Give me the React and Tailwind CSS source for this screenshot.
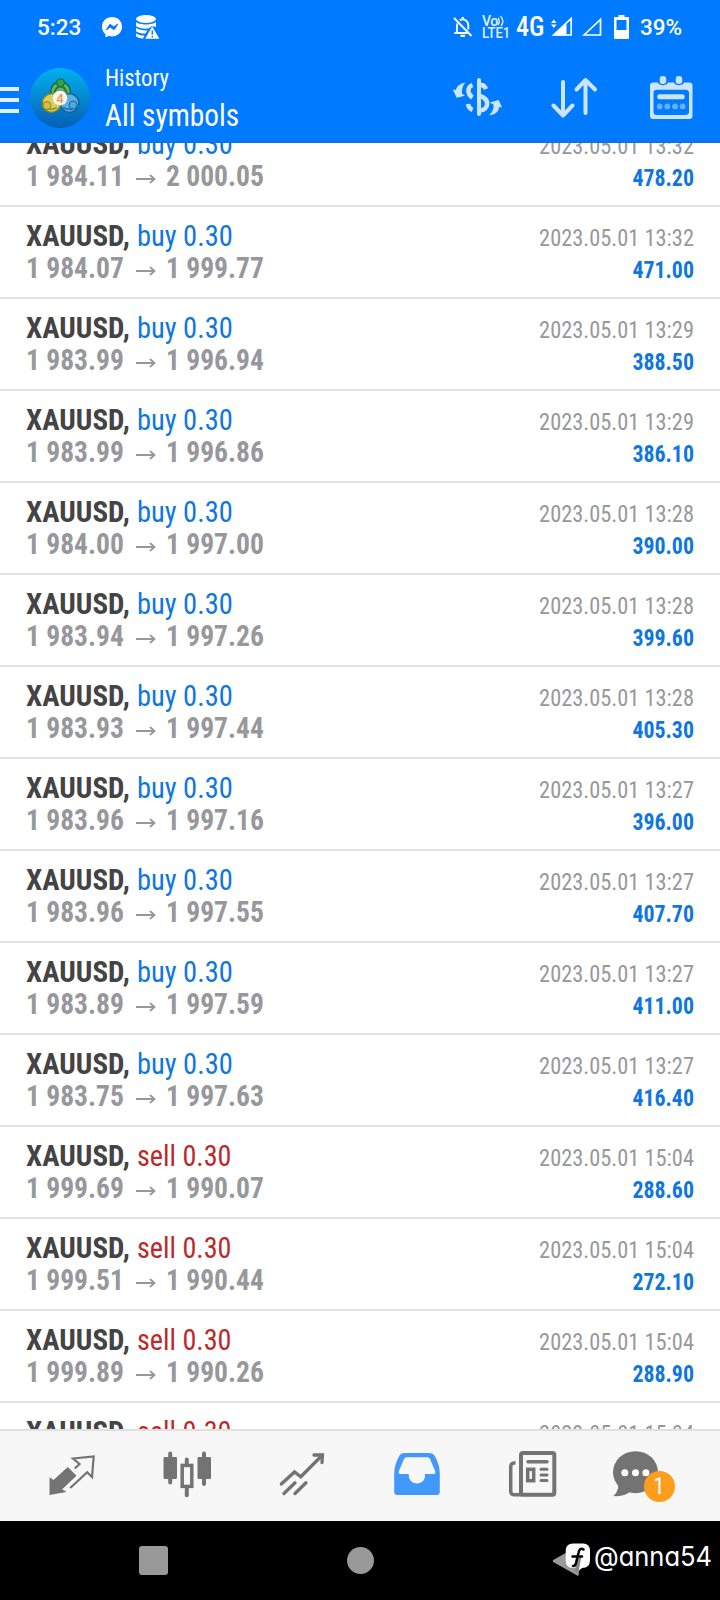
import React from 'react';
import { BsMessenger } from 'react-icons/bs';

const deals = [
  { side: 'buy', open: '1 984.11', close: '2 000.05', time: '2023.05.01 13:32', profit: '478.20' },
  { side: 'buy', open: '1 984.07', close: '1 999.77', time: '2023.05.01 13:32', profit: '471.00' },
  { side: 'buy', open: '1 983.99', close: '1 996.94', time: '2023.05.01 13:29', profit: '388.50' },
  { side: 'buy', open: '1 983.99', close: '1 996.86', time: '2023.05.01 13:29', profit: '386.10' },
  { side: 'buy', open: '1 984.00', close: '1 997.00', time: '2023.05.01 13:28', profit: '390.00' },
  { side: 'buy', open: '1 983.94', close: '1 997.26', time: '2023.05.01 13:28', profit: '399.60' },
  { side: 'buy', open: '1 983.93', close: '1 997.44', time: '2023.05.01 13:28', profit: '405.30' },
  { side: 'buy', open: '1 983.96', close: '1 997.16', time: '2023.05.01 13:27', profit: '396.00' },
  { side: 'buy', open: '1 983.96', close: '1 997.55', time: '2023.05.01 13:27', profit: '407.70' },
  { side: 'buy', open: '1 983.89', close: '1 997.59', time: '2023.05.01 13:27', profit: '411.00' },
  { side: 'buy', open: '1 983.75', close: '1 997.63', time: '2023.05.01 13:27', profit: '416.40' },
  { side: 'sell', open: '1 999.69', close: '1 990.07', time: '2023.05.01 15:04', profit: '288.60' },
  { side: 'sell', open: '1 999.51', close: '1 990.44', time: '2023.05.01 15:04', profit: '272.10' },
  { side: 'sell', open: '1 999.89', close: '1 990.26', time: '2023.05.01 15:04', profit: '288.90' },
  { side: 'sell', open: '', close: '', time: '2023.05.01 15:04', profit: '' },
];

function StatusBar() {
  return (
    <div className="h-[54px] flex items-center text-white font-['Roboto'] font-medium text-[22.5px] leading-none">
      <span className="w-[65px] ml-[37px]">5:23</span>
      <BsMessenger className="w-5 h-5 shrink-0" />
      <svg className="ml-[14px] shrink-0" width="24" height="24" viewBox="0 0 24 24">
        <ellipse cx="10" cy="4" rx="10" ry="4" fill="white" />
        <path d="M0 7 C3 10.300 17 10.300 20 7 V12 L16 11 L12.500 13.500 C7 14 2 13 0 11Z M0 13 C3 15 8 15.700 11.500 15.400 L9.500 18.600 C5 18.500 2 17.500 0 16.200Z M0 18.300 C2 20 5 20.500 8.500 20.600 L7 23.600 C3.500 23.200 1 22.500 0 21.200Z" fill="white" />
        <path d="M16.200 11.300 L23.300 23.700 H9.200Z" fill="white" />
        <path d="M16.300 15.500 V19.500 M16.300 20.800 V22.500" stroke="#007aff" strokeWidth="1.500" />
      </svg>

      <svg className="ml-[293px] shrink-0" width="20" height="22" viewBox="0 0 20 22" fill="none" stroke="white" strokeWidth="1.900">
        <path d="M1 2 L18.500 20" />
        <path d="M4.500 7.500 C3.700 9 3.900 12 3.900 16 M1.300 17 H14.500 M6.700 4.300 C11 1.800 15.300 5 15.300 9.500 V13.500" />
        <path d="M9.700 3.500 V1 M7.500 19.800 H12" strokeWidth="2.300" />
      </svg>
      <span className="ml-[9px] w-[28px] h-[24px] flex flex-col font-medium shrink-0 text-[#e3f1ff]">
        <span className="flex text-[14px] leading-[12px] tracking-tight">Vo
          <svg className="-ml-px" width="8" height="12" viewBox="0 0 8 12" fill="none" stroke="#e3f1ff" strokeWidth="1.300">
            <path d="M1 3 Q3.500 6.500 1 10 M3.500 1 Q8 6 4 11" />
          </svg>
        </span>
        <span className="text-[14px] leading-[13px] origin-left scale-x-[0.93]">LTE1</span>
      </span>
      <span className="ml-[6px] w-[29px] text-[27px] font-medium font-['Roboto_Condensed']">
        <span className="inline-block origin-left scale-x-[0.97]">4G</span>
      </span>
      <svg className="ml-[6px] shrink-0" width="22" height="20" viewBox="0 0 22 20">
        <path d="M0 6 L2.800 2.500 L5.600 6Z M0 7.500 L2.800 11 L5.600 7.500Z" fill="white" />
        <path d="M2.500 18 L20.200 1.500 V18Z" fill="none" stroke="white" strokeWidth="1.700" />
        <path d="M2 18.500 L15.500 6 V18.500Z" fill="white" />
      </svg>
      <svg className="ml-[9px] shrink-0" width="20" height="20" viewBox="0 0 20 20">
        <path d="M2 18 L18.500 2.500 V18Z" fill="none" stroke="white" strokeWidth="1.700" />
      </svg>
      <svg className="ml-[12px] -mt-px shrink-0" width="16" height="24" viewBox="0 0 16 24">
        <path d="M4.500 0 H10.500 V2 H14 Q15 2 15 3 V23 Q15 24 14 24 H1 Q0 24 0 23 V3 Q0 2 1 2 H4.500Z M2.500 5 V15 H12.500 V5Z" fill="white" fillRule="evenodd" />
      </svg>
      <span className="ml-[10px]">39%</span>
    </div>
  );
}

function AppLogo() {
  return (
    <svg className="ml-[11px] shrink-0" width="60" height="60" viewBox="0 0 60 60">
      <defs>
        <linearGradient id="logoBg" x1="0" y1="0" x2="0" y2="1">
          <stop offset="0" stopColor="#00b2ee" />
          <stop offset="0.550" stopColor="#0683cc" />
          <stop offset="1" stopColor="#075fb5" />
        </linearGradient>
      </defs>
      <circle cx="30" cy="30" r="30" fill="url(#logoBg)" />
      {/* three seated figures, each a solid body with a head */}
      <g strokeWidth="1.300">
        <circle cx="30.500" cy="23.500" r="9.800" fill="#62b566" stroke="#17613c" />
        <circle cx="39.500" cy="35" r="9.300" fill="#5bb0e6" stroke="#145b9c" />
        <circle cx="21.500" cy="35" r="9.300" fill="#d8d05a" stroke="#7d8427" />
      </g>
      <path d="M24.500 25 Q26 18.500 30.500 18.500 Q35 18.500 36.500 25" fill="none" stroke="#27773f" strokeWidth="2" />
      <path d="M18 41 Q22 42 27 39.500" fill="none" stroke="#98923a" strokeWidth="1.800" />
      <path d="M33 39.500 Q38 42 43 41" fill="none" stroke="#2573b4" strokeWidth="1.800" />
      <circle cx="30.500" cy="14.700" r="4" fill="#37a04b" stroke="#17613c" />
      <circle cx="17" cy="37.500" r="4" fill="#d9bd3d" stroke="#89822a" />
      <circle cx="43" cy="37" r="4" fill="#4ba7e2" stroke="#1763a3" />
      <circle cx="30" cy="30" r="7.300" fill="#fbf8f2" />
      <text x="30" y="34.500" textAnchor="middle" fontFamily="Roboto" fontSize="13" fontWeight="500" fill="#f0974a">4</text>
    </svg>
  );
}

function Toolbar() {
  return (
    <div className="h-[88px] flex items-center text-white">
      <div className="w-[19px] mt-[3px] flex flex-col gap-[7px] shrink-0">
        <div className="h-[4px] bg-[#e0f0ff]"></div>
        <div className="h-[4px] bg-[#e0f0ff]"></div>
        <div className="h-[4px] bg-[#e0f0ff]"></div>
      </div>
      <AppLogo />
      <div className="ml-[15px] w-[348px] shrink-0 font-['Roboto_Condensed'] whitespace-nowrap">
        <div className="text-[24px] leading-[32px] mt-[2px] origin-left scale-x-[0.945]">History</div>
        <div className="text-[32px] leading-[42px] origin-left scale-x-[0.917]">All symbols</div>
      </div>
      <svg className="shrink-0" width="50" height="44" viewBox="1 0 50 44" fill="none" stroke="#cce5ff" strokeWidth="4" strokeLinecap="round">
        <path d="M27 4 V38" />
        <path d="M20.500 9 C15 11 15 18 20.500 21.500 M28 9 C31 8.500 33 10 34 13 M28 20 C38 23 37 34 28 34.500 M16 28 C16.500 31 18 33 20.500 34" strokeWidth="4.500" strokeLinecap="butt" />
        <path d="M13.500 6.500 C8 7.500 4.500 10.500 4 14 L0.700 13.500 L4.700 21.800 L13 19.700 L10 17.500 C9.700 12.500 11 9 13.500 6.500Z" fill="#cce5ff" stroke="none" />
        <path d="M36.700 39.500 C43 38.500 47 36 47 31 L50 31.500 L46.700 24 L37.500 26.500 L41.500 28.500 C42 33 40 37 36.700 39.500Z" fill="#cce5ff" stroke="none" />
      </svg>
      <svg className="ml-[48px] shrink-0" width="47" height="42" viewBox="0 0 47 42" fill="none" stroke="#cce5ff" strokeWidth="4" strokeLinecap="round" strokeLinejoin="round">
        <path d="M12 5 V38 M2.500 28.500 L12 38.500 L21.500 28.500" />
        <path d="M34.500 36 V3 M25.500 12.500 L34.500 3 L44 12.500" />
      </svg>
      <svg className="ml-[52px] -mt-px shrink-0" width="44" height="44" viewBox="0 0 44 44">
        <path d="M3 6.500 H8 C9 10 17 10 18 6.500 H24 C25 10 33 10 34 6.500 H39.500 Q42.500 6.500 42.500 9.500 V40 Q42.500 43 39.500 43 H3 Q0 43 0 40 V9.500 Q0 6.500 3 6.500Z M7 13.700 Q3.500 13.700 3.500 17 V36 Q3.500 39 7 39 H35.500 Q39 39 39 36 V17 Q39 13.700 35.500 13.700Z" fill="#cce5ff" fillRule="evenodd" />
        <rect x="9.700" y="0" width="6.500" height="8" rx="3" fill="#cce5ff" />
        <rect x="25.700" y="0" width="6.500" height="8" rx="3" fill="#cce5ff" />
        <rect x="7.300" y="18.300" width="27.300" height="5" rx="2" fill="#cce5ff" />
        <g fill="#66afff">
          <circle cx="9.700" cy="30.400" r="2.900" />
          <circle cx="17.300" cy="30.400" r="2.900" />
          <circle cx="25" cy="30.400" r="2.900" />
          <circle cx="32.600" cy="30.400" r="2.900" />
        </g>
      </svg>
    </div>
  );
}

function DealRow({ deal }) {
  return (
    <div className="h-[92px] shrink-0 border-b-2 border-[#e2e2e4] pl-[26px] pr-[26px] pt-[13px] flex justify-between whitespace-nowrap font-['Roboto_Condensed']">
      <div>
        <div className="text-[29px] leading-[32px]">
          <span className="font-bold text-[#444444]">XAUUSD,</span>
          <span className={deal.side === 'buy' ? 'inline-block ml-[7px] origin-left scale-x-[0.98] text-[#0f76df]' : 'inline-block ml-[7px] origin-left scale-x-[0.97] text-[#bd292b]'}>{deal.side} 0.30</span>
        </div>
        {deal.open && (
          <div className="text-[29px] leading-[32px] font-bold text-[#97989b] flex">
            <span className="w-[110px] origin-left scale-x-[0.95]">{deal.open}</span>
            <svg className="w-[20px] mt-[13px] mr-[10px]" height="12" viewBox="0 0 20 12" fill="none" stroke="#97989b" strokeWidth="1.800">
              <path d="M0 6 H18.500 M14 2 L18.500 6 L14 10" />
            </svg>
            <span className="origin-left scale-x-[0.95]">{deal.close}</span>
          </div>
        )}
      </div>
      <div className="text-right text-[24px] leading-[32px] pt-[2px]">
        <div className="text-[#97989b] origin-right scale-x-[0.933]">{deal.time}</div>
        <div className="font-bold text-[#0f76df] origin-right scale-x-[0.91]">{deal.profit}</div>
      </div>
    </div>
  );
}

function TabBar() {
  return (
    <div className="h-[92px] shrink-0 border-t-2 border-[#e0e0e0] bg-[#f7f7f7] pl-[14px] pr-[16px] grid grid-cols-6 items-center justify-items-center">
      <svg width="56" height="56" viewBox="0 0 56 56">
        <path d="M5.500 29.300 L9.500 32 L23.800 19 L32.500 27.700 L18.200 41.300 L22.500 44 L5.500 47Z" fill="#737373" />
        <path d="M30.800 20.500 L35.500 16 L29 10.500 L49.700 8.500 L48 29 L43.200 24.300 L26.200 40" fill="none" stroke="#737373" strokeWidth="2.200" />
      </svg>
      <svg width="56" height="56" viewBox="0 0 56 56" stroke="#737373" strokeLinecap="round">
        <path d="M11.200 5.500 V34.500 M45 5.500 V36 M27.800 11.500 V15 M27.800 41 V47.300" strokeWidth="4" />
        <rect x="5" y="9.500" width="12.500" height="21" rx="0.500" fill="#737373" />
        <rect x="39" y="9.500" width="12.500" height="21" rx="0.500" fill="#737373" />
        <rect x="23.200" y="17.400" width="9.600" height="21" fill="none" strokeWidth="3.500" />
      </svg>
      <svg width="56" height="56" viewBox="0 0 56 56" fill="none" stroke="#737373" strokeWidth="3.300" strokeLinecap="round">
        <path d="M7.300 36 L20.500 24 L26.800 28.700 L48 7.500" />
        <path d="M40 7 H48.500 L48 14.500" />
        <path d="M21 34.800 L10 45.500 M32 34.800 L21 45.500" />
      </svg>
      <svg width="56" height="56" viewBox="0 0 56 56">
        <path d="M14.500 5 H41 Q44 5 45.500 7.500 Q50.800 17 50.800 25 V44 Q50.800 47 47.800 47 H8.200 Q5.200 47 5.200 44 V25 Q5.200 17 10.500 7.500 Q12 5 14.500 5Z M17.500 9.200 Q16 9.200 15 11 L9.700 23.500 Q9.300 26 11.500 26 H19.800 V27.500 C20 38 36 38 36 27.500 V26 H44.500 Q46.700 26 46.300 23.500 L41 11 Q40 9.200 38.500 9.200Z" fill="#4299fb" fillRule="evenodd" />
      </svg>
      <svg width="56" height="56" viewBox="0 0 56 56" fill="none" stroke="#737373" strokeWidth="4">
        <rect x="17" y="5" width="33.300" height="41.700" rx="2" />
        <path d="M11.500 14.800 Q6.700 15 6.700 18.500 V43 Q6.700 46.700 10 46.700 H18" strokeWidth="3.500" />
        <path d="M24 13.700 H43" strokeWidth="3.500" strokeLinecap="round" />
        <rect x="23.700" y="21.300" width="6" height="11.400" strokeWidth="3.500" />
        <path d="M37 21.300 H43 M37 26.900 H43 M37 32.500 H43" strokeWidth="3" strokeLinecap="round" />
      </svg>
      <div className="relative w-[56px] h-[56px]">
        <svg className="overflow-visible" width="56" height="56" viewBox="0 0 56 56">
          <ellipse cx="16.500" cy="24.200" rx="22.500" ry="21" fill="#737373" />
          <path d="M-2 34 Q1.500 41 -5.500 48 Q6 49 12 43Z" fill="#737373" />
          <circle cx="5.800" cy="24.700" r="3.500" fill="#fff" />
          <circle cx="16.500" cy="24.700" r="3.500" fill="#fff" />
          <circle cx="26.900" cy="24.700" r="3.500" fill="#fff" />
        </svg>
        <span className="absolute left-[25px] top-[23px] w-[31px] h-[31px] rounded-full bg-[#ff9d1c] text-white text-[23px] leading-[32px] text-center font-['Roboto_Condensed']">1</span>
      </div>
    </div>
  );
}

function SystemNav() {
  return (
    <div className="relative h-[79px] shrink-0 bg-black px-[50px] grid grid-cols-3 items-center justify-items-center">
      <div className="w-[29px] h-[29px] rounded-[3px] bg-[#999999]"></div>
      <div className="w-[27px] h-[27px] ml-px rounded-full bg-[#999999]"></div>
      <svg width="28" height="32" viewBox="0 0 28 32">
        <path d="M25 2 V30 L1 16.500 Q0 16 1 15.500Z" fill="#999999" stroke="#999999" strokeWidth="1.500" strokeLinejoin="round" />
      </svg>
      {/* watermark over the back button */}
      <div className="absolute left-[565px] top-[21px] flex items-center text-white">
        <svg width="26" height="30" viewBox="0 0 26 30">
          <path d="M8 1.500 H18 Q25 1.500 25 9 V18 Q25 26 17 26 L13 29.500 L11 26 H8 Q0.700 26 0.700 18 V9 Q0.700 1.500 8 1.500Z" fill="white" />
          <path d="M14.500 14 L11.500 30" stroke="#888888" strokeWidth="4" />
          <path d="M18.500 7.500 C15.500 5.500 14 8 13.500 11 L11 21 Q10 24.500 8 24 M7.500 14.500 H17" fill="none" stroke="black" strokeWidth="2.500" strokeLinecap="round" />
        </svg>
        <span className="ml-[3px] text-[27px] leading-[30px] origin-left scale-x-[0.945] font-['Inter'] [font-feature-settings:'cv11']">@anna54</span>
      </div>
    </div>
  );
}

export default function App() {
  return (
    <div className="w-[720px] h-[1600px] flex flex-col overflow-hidden bg-white">
      <header className="h-[143px] shrink-0 bg-[#007aff] border-b border-[#1a6cc4]">
        <StatusBar />
        <Toolbar />
      </header>
      <main className="h-[1286px] shrink-0 overflow-hidden">
        <div className="-mt-[28px] flex flex-col">
          {deals.map((deal, i) => (
            <DealRow key={i} deal={deal} />
          ))}
        </div>
      </main>
      <TabBar />
      <SystemNav />
    </div>
  );
}
